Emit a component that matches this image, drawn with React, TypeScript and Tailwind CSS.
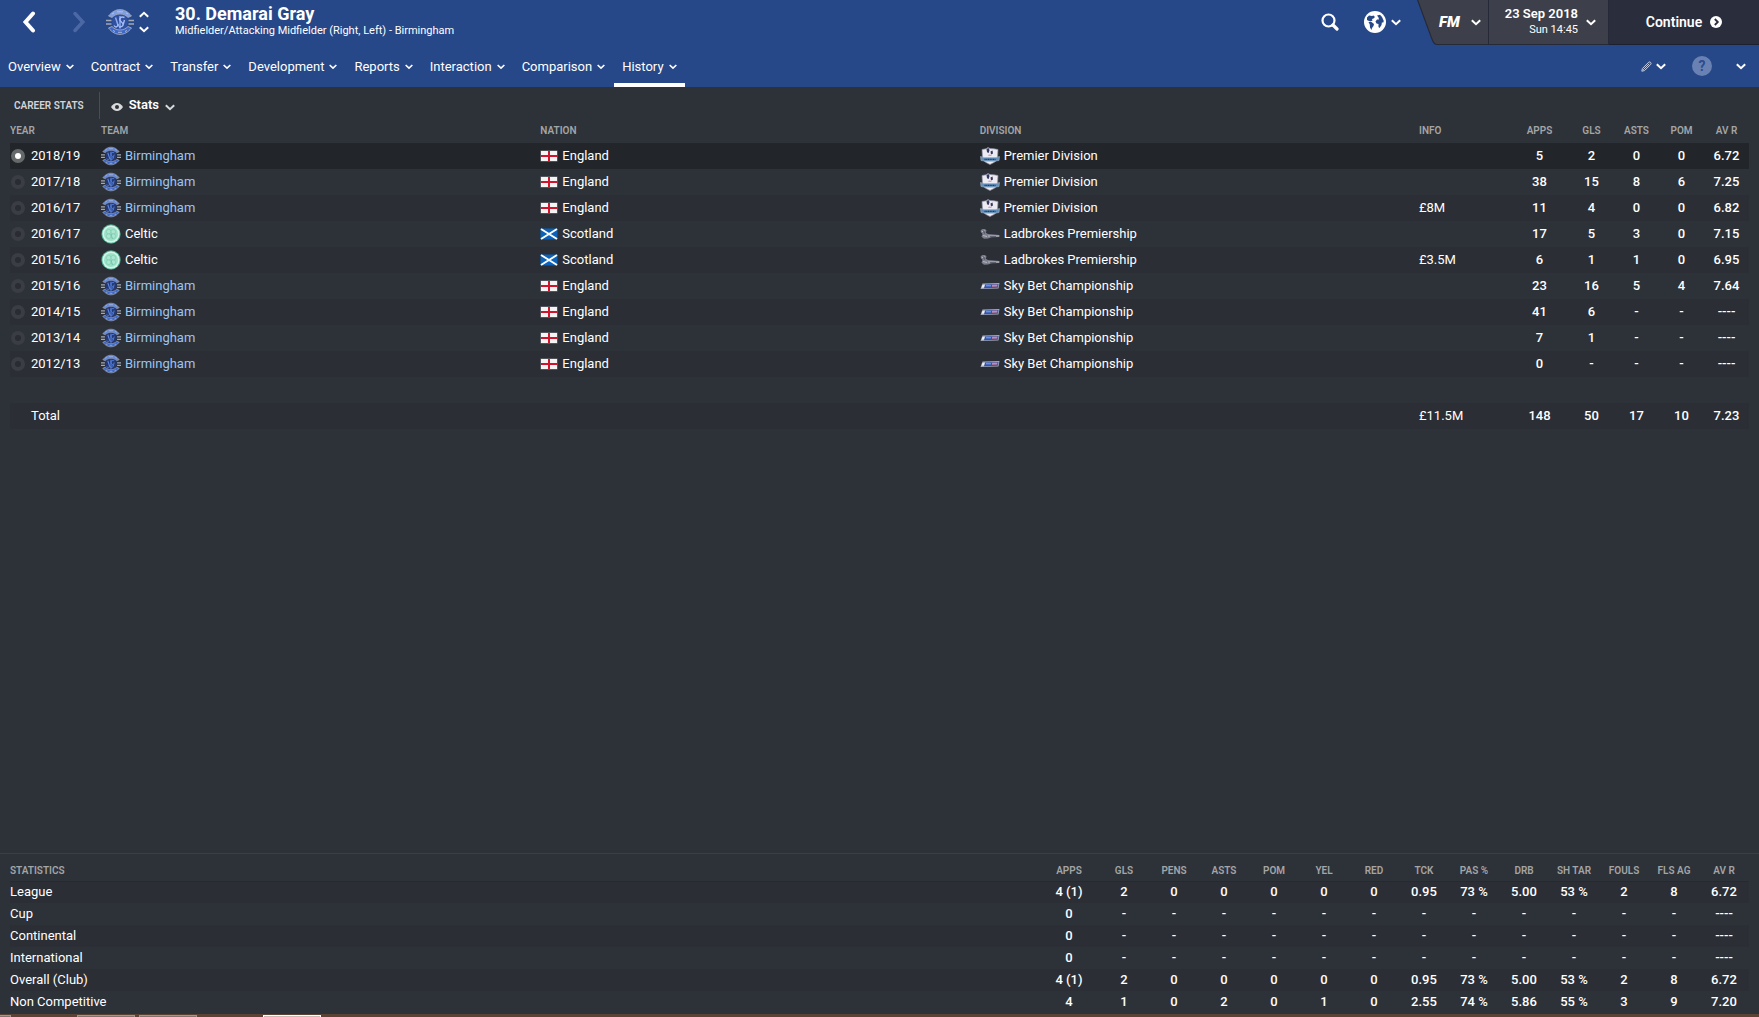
import { useState } from "react"

type TeamName = "Birmingham" | "Celtic"
type NationName = "England" | "Scotland"
type DivisionName = "Premier Division" | "Ladbrokes Premiership" | "Sky Bet Championship"

interface Season {
  year: string
  team: TeamName
  nation: NationName
  division: DivisionName
  info: string
  stats: string[]
}

const tabs = ["Overview", "Contract", "Transfer", "Development", "Reports", "Interaction", "Comparison", "History"]

const seasons: Season[] = [
  { year: "2018/19", team: "Birmingham", nation: "England", division: "Premier Division", info: "", stats: ["5", "2", "0", "0", "6.72"] },
  { year: "2017/18", team: "Birmingham", nation: "England", division: "Premier Division", info: "", stats: ["38", "15", "8", "6", "7.25"] },
  { year: "2016/17", team: "Birmingham", nation: "England", division: "Premier Division", info: "£8M", stats: ["11", "4", "0", "0", "6.82"] },
  { year: "2016/17", team: "Celtic", nation: "Scotland", division: "Ladbrokes Premiership", info: "", stats: ["17", "5", "3", "0", "7.15"] },
  { year: "2015/16", team: "Celtic", nation: "Scotland", division: "Ladbrokes Premiership", info: "£3.5M", stats: ["6", "1", "1", "0", "6.95"] },
  { year: "2015/16", team: "Birmingham", nation: "England", division: "Sky Bet Championship", info: "", stats: ["23", "16", "5", "4", "7.64"] },
  { year: "2014/15", team: "Birmingham", nation: "England", division: "Sky Bet Championship", info: "", stats: ["41", "6", "-", "-", "----"] },
  { year: "2013/14", team: "Birmingham", nation: "England", division: "Sky Bet Championship", info: "", stats: ["7", "1", "-", "-", "----"] },
  { year: "2012/13", team: "Birmingham", nation: "England", division: "Sky Bet Championship", info: "", stats: ["0", "-", "-", "-", "----"] },
]

const totals = ["148", "50", "17", "10", "7.23"]

const statHeads = ["APPS", "GLS", "PENS", "ASTS", "POM", "YEL", "RED", "TCK", "PAS %", "DRB", "SH TAR", "FOULS", "FLS AG", "AV R"]
const played = ["4 (1)", "2", "0", "0", "0", "0", "0", "0.95", "73 %", "5.00", "53 %", "2", "8", "6.72"]
const unplayed = ["0", "-", "-", "-", "-", "-", "-", "-", "-", "-", "-", "-", "-", "----"]

const statRows = [
  { name: "League", values: played },
  { name: "Cup", values: unplayed },
  { name: "Continental", values: unplayed },
  { name: "International", values: unplayed },
  { name: "Overall (Club)", values: played },
  { name: "Non Competitive", values: ["4", "1", "0", "2", "0", "1", "0", "2.55", "74 %", "5.86", "55 %", "3", "9", "7.20"] },
]

function Chevron({ className = "w-2.5", up = false }: { className?: string; up?: boolean }) {
  return (
    <svg viewBox="0 0 10 7" className={`shrink-0 ${className}`} fill="none" stroke="currentColor" strokeWidth="2">
      <path d={up ? "M0.8 5.8 5 1.8 9.2 5.8" : "M0.8 1.2 5 5.2 9.2 1.2"} />
    </svg>
  )
}

function BirminghamCrest({ className, light = false }: { className: string; light?: boolean }) {
  return (
    <svg viewBox="0 0 28 28" className={`shrink-0 ${className}`} fill="none">
      <ellipse cx="14" cy="14" rx="8" ry="9" fill={light ? "#2f519f" : "#26396f"} />
      <path d="M2.500 8C6 3.500 10 1.600 14 1.600S22 3.500 25.500 8L22 9.500C19.500 7 17 6 14 6S8.500 7 6 9.500Z" fill={light ? "#7f9fe4" : "#6389dc"} stroke="#a3a8b8" strokeWidth="0.8" />
      <path d="M2.500 20C6 24.500 10 26.400 14 26.400S22 24.500 25.500 20L22 18.500C19.500 21 17 22 14 22S8.500 21 6 18.500Z" fill="#3f69c9" stroke="#b4b8c4" strokeWidth="0.8" />
      <path d="M0 12.500H5.500M0 16H5.500M22.500 12.500H28M22.500 16H28" stroke="#a3a8b4" strokeWidth="1.600" />
      <path d="M9.500 9.500 12.500 18.500M14 8V20.500" stroke={light ? "#8daaf0" : "#5f88e0"} strokeWidth="1.500" />
      <path d="M18.500 9.500C15 8 12 11 15 13.500S18 19 13 19M8 17.500C9.500 20 12 19 12 16M18.500 12 17 17" stroke={light ? "#a5bcf4" : "#4f7bdc"} strokeWidth="1.400" />
      <path d="M6 6 8 4.800M11 3.800H17M20 4.800 22 6M7 22.500 9 23.500M12 24.300H16M19 23.500 21 22.500" stroke="#c3cbe2" strokeWidth="0.800" />
    </svg>
  )
}

function CelticCrest() {
  return (
    <svg viewBox="0 0 20 20" className="size-5 shrink-0">
      <circle cx="10" cy="10" r="9.700" fill="#46a98a" />
      <circle cx="10" cy="10" r="8.700" fill="#d3f5e8" />
      <circle cx="10" cy="10" r="7" fill="#9ce0c8" />
      <g fill="#aae6d1" stroke="#7bcbae" strokeWidth="0.600">
        <circle cx="7.700" cy="7.700" r="2.300" />
        <circle cx="12.300" cy="7.700" r="2.300" />
        <circle cx="7.700" cy="12.200" r="2.300" />
        <circle cx="12.300" cy="12.200" r="2.300" />
      </g>
      <path d="M10 10 11.500 15" stroke="#6cc0a2" strokeWidth="0.800" />
    </svg>
  )
}

function Flag({ nation }: { nation: NationName }) {
  return (
    <svg viewBox="0 0 18 12" className="h-3 w-[18px] shrink-0">
      {nation === "England" ? (
        <>
          <rect x="0.500" y="0.500" width="17" height="11" fill="#777a80" />
          <rect x="1" y="1" width="16" height="10" fill="#f4f4f4" />
          <path d="M9 1V11M1 6H17" stroke="#d0142c" strokeWidth="2" />
        </>
      ) : (
        <>
          <rect x="0.500" y="0.500" width="17" height="11" fill="#0b62b8" />
          <path d="M1 1 17 11M17 1 1 11" stroke="#fff" strokeWidth="2" />
        </>
      )}
    </svg>
  )
}

function DivisionLogo({ division }: { division: DivisionName }) {
  if (division === "Premier Division") {
    return (
      <svg viewBox="0 0 20 20" className="size-5 shrink-0">
        <path d="M2 3.500 6 2.800 8 1.500 10 2.500 14 2.800 18 3.500 17.500 12C17 15.500 13 17 10 18.500C7 17 3 15.500 2.500 12Z" fill="#eceaf2" stroke="#8d8fa0" strokeWidth="0.700" />
        <path d="M6.500 3 8.500 2 9.500 4 8.700 7 7 6.200ZM10.500 5.500 12.500 4.500 13 7.500 11 8.500Z" fill="#34375e" />
        <path d="M8 9 10 8.500 12 9.800H8.500Z" fill="#d7889c" />
        <path d="M0.500 10.500 4 11.500H16L19.500 10.500 19 14.500 15 15.200H5L1 14.500Z" fill="#5f8fba" stroke="#a6b0bf" strokeWidth="0.600" />
        <path d="M4.500 13.400H15.500" stroke="#24395f" strokeWidth="1.400" strokeDasharray="1.200 0.500" />
      </svg>
    )
  }
  if (division === "Ladbrokes Premiership") {
    return (
      <svg viewBox="0 0 20 20" className="size-5 shrink-0" fill="none">
        <path d="M0.500 7C1.500 4.500 5 4.500 6.500 6.500L5.800 8.800 8 10 19.500 11V13L12 13.200 8 14.500 4 14.800 1.500 12.800 2.500 10Z" fill="#7c7f8b" />
        <path d="M1.500 8 4.500 6.500M3 11.500 7 12.500M8 12H19" stroke="#b6b8c2" strokeWidth="1" />
        <path d="M3.500 6.500 4.500 9.500M10 12.800H16" stroke="#42465a" strokeWidth="0.900" />
      </svg>
    )
  }
  return (
    <svg viewBox="0 0 20 20" className="size-5 shrink-0">
      <path d="M2.500 7.500 19.500 7 18.500 12.500 0.500 13Z" fill="#a4a9ba" />
      <path d="M5 8.500 18.500 8 17.800 11.800 4 12.200Z" fill="#2c55b4" />
      <path d="M12 8.800 17.500 8.500 17.200 10.500 12 10.700Z" fill="#dc8294" />
      <path d="M2.500 9 4.800 8.800 4 11.500 1.500 11.800Z" fill="#f0eef2" />
      <path d="M6 9.800H11" stroke="#a8bdf0" strokeWidth="0.800" />
    </svg>
  )
}

function TopBar() {
  return (
    <div className="flex h-[45px] items-start text-white">
      <div className="flex h-11 min-w-0 flex-1 items-center">
        <button aria-label="Back" className="ml-[22px]">
          <svg viewBox="0 0 14 22" className="h-[22px] w-3.5" fill="none" stroke="currentColor" strokeWidth="4">
            <path d="M11 2.500 3.500 11 11 19.500" strokeLinecap="round" />
          </svg>
        </button>
        <button aria-label="Forward" className="ml-9 text-[#4c68a4]">
          <svg viewBox="0 0 14 22" className="h-[22px] w-3.5" fill="none" stroke="currentColor" strokeWidth="3.500">
            <path d="M3 2.500 10.800 11 3 19.500" strokeLinecap="round" />
          </svg>
        </button>
        <BirminghamCrest className="ml-5 size-7" light />
        <div className="ml-[5px] flex flex-col gap-2">
          <button aria-label="Previous player"><Chevron up className="w-2.5" /></button>
          <button aria-label="Next player"><Chevron className="w-2.5" /></button>
        </div>
        <div className="ml-[26px] min-w-0 pb-0.5">
          <h1 className="truncate text-[18px] leading-5 font-bold">30. Demarai Gray</h1>
          <p className="truncate text-[11px] leading-[14px]">Midfielder/Attacking Midfielder (Right, Left) - Birmingham</p>
        </div>
      </div>

      <button aria-label="Search" className="flex h-11 items-center">
        <svg viewBox="0 0 18 18" className="size-[18px]" fill="none" stroke="currentColor">
          <circle cx="7.500" cy="7.500" r="6" strokeWidth="2.200" />
          <path d="M12 12 16 16" strokeWidth="3.200" strokeLinecap="round" />
        </svg>
      </button>
      <button aria-label="World" className="ml-[25px] flex h-11 items-center gap-[5px]">
        <svg viewBox="0 0 22 22" className="size-[22px]">
          <circle cx="11" cy="11" r="11" fill="#fff" />
          <path d="M3 6.500 5 4.500 8 5 9.500 4.500 11 6 9.500 7.500 8 8 8.500 9.500 6.500 10.500 5 10 3 9Z" fill="#264788" />
          <path d="M4.500 11 7.500 11 10 13 9.500 15 8 17 7.500 19 6 16.500 5.800 13.500Z" fill="#264788" />
          <path d="M13 4.500 16 3.800 18 6 19.800 10 19 12 18 11 17.500 14 15.500 17 14.500 16 14.500 13 12.500 12.500 11.500 10.500 13 8.500 15 8.500 14.500 6.500Z" fill="#264788" />
        </svg>
        <Chevron />
      </button>

      <div className="ml-4 flex h-[45px] items-stretch">
        <svg viewBox="0 0 20 45" className="h-[45px] w-5 shrink-0">
          <path d="M0 0 14.500 39.500Q16.500 45 20 45V0Z" fill="#252938" />
          <path d="M1.200 0 15.500 39Q17.500 44 20 44V0Z" fill="#3d3f4a" />
        </svg>
        <button className="flex w-[52px] items-center justify-between border-r border-b border-[#252938] bg-[#3d3f4a] pr-[7px] pl-0.5">
          <span className="text-[15px] leading-4 font-black italic">FM</span>
          <Chevron />
        </button>
        <button className="flex w-[120px] items-center justify-end gap-2 border-r border-b border-[#252938] bg-[#3d3f4a] pr-3">
          <span className="text-right">
            <span className="block text-[13px] leading-4 font-semibold">23 Sep 2018</span>
            <span className="block text-[11px] leading-4">Sun 14:45</span>
          </span>
          <Chevron />
        </button>
        <button className="flex w-[150px] items-center justify-center gap-2 border-b border-[#1d2031] bg-[#2a2d3c]">
          <span className="text-[14px] leading-4 font-semibold">Continue</span>
          <svg viewBox="0 0 12 12" className="size-3">
            <circle cx="6" cy="6" r="6" fill="#fff" />
            <path d="M4.800 3 7.800 6 4.800 9" fill="none" stroke="#2a2d3c" strokeWidth="1.800" />
          </svg>
        </button>
      </div>
    </div>
  )
}

function NavBar() {
  const [active, setActive] = useState("History")

  return (
    <div className="flex h-[42px] items-stretch text-white">
      <nav className="flex flex-1 items-stretch gap-px">
        {tabs.map((tab) => (
          <button
            key={tab}
            onClick={() => setActive(tab)}
            className={`flex items-center gap-[5px] border-b-4 px-2 pt-1.5 text-[13px] leading-4 ${tab === active ? "border-white" : "border-transparent"}`}
          >
            {tab}
            <Chevron className="w-2" />
          </button>
        ))}
      </nav>
      <button aria-label="Edit" className="flex items-center gap-1">
        <svg viewBox="0 0 11 11" className="size-[11px]" fill="none" stroke="#c5cfe4" strokeWidth="1">
          <path d="M0.800 10.200 1.400 7.500 7.800 1.100Q8.800 0.500 9.600 1.400T9.900 3.200L3.500 9.600ZM2.200 8.800 8.300 2.700" />
        </svg>
        <Chevron />
      </button>
      <button aria-label="Help" className="ml-[26px] flex items-center">
        <span className="flex size-5 items-center justify-center rounded-full bg-[#6a82b3] text-[14px] leading-5 font-bold text-[#2b4d8f]">?</span>
      </button>
      <button aria-label="More" className="mr-[13px] ml-6 flex items-center">
        <Chevron />
      </button>
    </div>
  )
}

function CareerTable() {
  const [selected, setSelected] = useState(0)

  return (
    <table className="w-full table-fixed text-left text-[13px] leading-4 text-white">
      <colgroup>
        <col className="w-[91px]" />
        <col />
        <col />
        <col />
        <col className="w-[91px]" />
        <col className="w-[59px]" />
        <col className="w-[45px]" />
        <col className="w-[45px]" />
        <col className="w-[45px]" />
        <col className="w-[45px]" />
      </colgroup>
      <thead>
        <tr className="h-6 text-[10px] text-[#a3a5a6]">
          {["YEAR", "TEAM", "NATION", "DIVISION", "INFO"].map((head) => (
            <th key={head} className="font-semibold">{head}</th>
          ))}
          {["APPS", "GLS", "ASTS", "POM", "AV R"].map((head) => (
            <th key={head} className="text-center font-semibold">{head}</th>
          ))}
        </tr>
      </thead>
      <tbody>
        {seasons.map((season, index) => (
          <tr
            key={index}
            className={`h-[26px] ${index === selected ? "bg-[#222529]" : index % 2 === 0 ? "bg-[#2b2e35]" : ""}`}
          >
            <td>
              <label className="flex items-center gap-1.5 pl-px">
                <input
                  type="radio"
                  name="season"
                  checked={index === selected}
                  onChange={() => setSelected(index)}
                  className="size-3.5 shrink-0 appearance-none rounded-full border-4 border-[#3b3d44] bg-[#2a2c33] checked:border-[#66696a] checked:bg-white"
                />
                {season.year}
              </label>
            </td>
            <td>
              <a href="#team" className={`flex items-center gap-1 ${season.team === "Birmingham" ? "text-[#9cc4f2]" : ""}`}>
                {season.team === "Birmingham" ? <BirminghamCrest className="size-5" /> : <CelticCrest />}
                {season.team}
              </a>
            </td>
            <td>
              <a href="#nation" className="flex items-center gap-1">
                <Flag nation={season.nation} />
                {season.nation}
              </a>
            </td>
            <td>
              <a href="#division" className="flex items-center gap-1">
                <DivisionLogo division={season.division} />
                {season.division}
              </a>
            </td>
            <td>{season.info}</td>
            {season.stats.map((value, i) => (
              <td key={i} className="text-center font-medium">{value}</td>
            ))}
          </tr>
        ))}
        <tr className="h-[26px]">
          <td colSpan={10} />
        </tr>
        <tr className="h-[26px] bg-[#2b2e35]">
          <td colSpan={4} className="pl-[21px]">Total</td>
          <td>£11.5M</td>
          {totals.map((value, i) => (
            <td key={i} className="text-center font-medium">{value}</td>
          ))}
        </tr>
      </tbody>
    </table>
  )
}

function StatisticsTable() {
  return (
    <table className="w-full table-fixed text-center text-[13px] leading-4 text-white">
      <colgroup>
        <col />
        <col className="w-[60px]" />
        {statHeads.slice(1).map((head) => (
          <col key={head} className="w-[50px]" />
        ))}
      </colgroup>
      <thead>
        <tr className="h-[27px] border-b border-[#262930] text-[10px] text-[#a3a5a6]">
          <th className="pt-2 text-left font-semibold">STATISTICS</th>
          {statHeads.map((head) => (
            <th key={head} className="pt-2 font-semibold">{head}</th>
          ))}
        </tr>
      </thead>
      <tbody>
        {statRows.map((row, index) => (
          <tr key={row.name} className={`h-[22px] ${index % 2 === 0 ? "bg-[#2b2e35]" : ""}`}>
            <td className="text-left">{row.name}</td>
            {row.values.map((value, i) => (
              <td key={i} className="font-medium">{value}</td>
            ))}
          </tr>
        ))}
      </tbody>
    </table>
  )
}

export default function App() {
  return (
    <div className="flex min-h-screen flex-col bg-[#2d3138] font-['Roboto',sans-serif]">
      <header className="bg-[#264788]">
        <TopBar />
        <NavBar />
      </header>

      <div className="flex h-8 items-center pt-1">
        <h2 className="flex h-[27px] items-center border-r border-[#494c53] pt-0.5 pr-[15px] pl-3.5 text-[10px] leading-4 font-semibold text-[#d3d5d8]">
          CAREER STATS
        </h2>
        <label className="flex items-center gap-1.5 pl-[11px] text-[#d8dadc]">
          <svg viewBox="0 0 12 8" className="mt-1 h-2 w-3">
            <path d="M0 4Q2.500 0 6 0T12 4Q9.500 8 6 8T0 4Z" fill="currentColor" />
            <circle cx="6" cy="4" r="2" fill="#2d3138" />
          </svg>
          <select aria-label="View" className="[field-sizing:content] appearance-none bg-transparent text-[13px] leading-4 font-semibold text-white">
            <option>Stats</option>
          </select>
          <Chevron className="mt-1 w-2.5" />
        </label>
      </div>

      <main className="flex-1 px-2.5">
        <CareerTable />
      </main>

      <section className="border-t border-[#3a3e45] px-2.5">
        <StatisticsTable />
      </section>

      {/* top edge of the taskbar */}
      <div className="mt-px flex h-[3px] bg-[#5a4335]">
        <div className="mt-px w-[11px] border-t border-r border-[#a3968e] bg-[#81746c]" />
        <div className="mt-px ml-[66px] w-[58px] border border-b-0 border-[#a3968e] bg-[#81746c]" />
        <div className="mt-px ml-1 w-[58px] border border-b-0 border-[#a3968e] bg-[#81746c]" />
        <div className="mt-px ml-[66px] w-[58px] border border-b-0 border-white bg-[#c4bcb6]" />
      </div>
    </div>
  )
}
